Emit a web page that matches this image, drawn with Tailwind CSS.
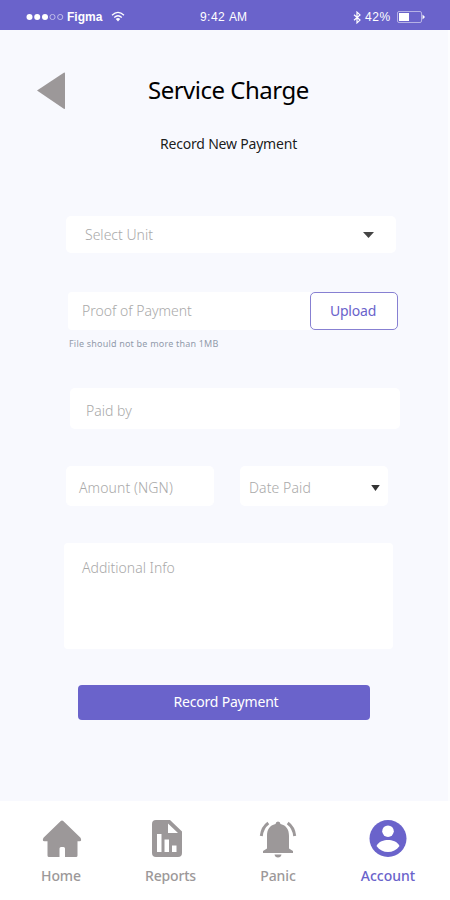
<!DOCTYPE html>
<html lang="en">
<head>
<meta charset="utf-8">
<meta name="viewport" content="width=device-width, initial-scale=1">
<title>Service Charge</title>
<script src="https://cdn.jsdelivr.net/npm/@tailwindcss/browser@4"></script>
</head>
<body class="bg-white font-['Noto_Sans','Open_Sans',sans-serif]">
<div class="w-[450px] h-[900px] flex flex-col overflow-hidden whitespace-nowrap">
  <header class="h-[30px] shrink-0 bg-[#6a63cb] text-white grid grid-cols-3 items-center pl-[26px] pr-[25px] pt-[4px] font-['Liberation_Sans',sans-serif] text-[12px]">
    <div class="flex items-center">
      <svg class="w-[38px] h-[8px]" viewBox="0 0 38 8" fill="white"><circle cx="3.5" cy="4" r="3"/><circle cx="11.2" cy="4" r="3"/><circle cx="19" cy="4" r="3"/><g fill="none" stroke="white" stroke-width=".7" opacity=".8"><circle cx="26.5" cy="4" r="2.6"/><circle cx="34.2" cy="4" r="2.6"/></g></svg>
      <span class="ml-[3px] font-bold">Figma</span>
      <svg class="ml-[9px] w-[14px] h-[11px] -mt-[2px]" viewBox="0 0 14 11" fill="none" stroke="white" stroke-width="1.3"><path d="M1 4.2Q7-1.4 13 4.2M3.2 6.4Q7 3 10.8 6.4"/><path d="M4.8 7.9Q7 6.1 9.2 7.9L7 10.4Z" fill="white" stroke="none"/></svg>
    </div>
    <div class="text-center pr-[4px] tracking-[0.5px]">9:42 <span class="tracking-[0px]">AM</span></div>
    <div class="flex items-center justify-end">
      <svg class="w-[8px] h-[13px]" viewBox="0 0 8 13" fill="none" stroke="white" stroke-width="1.2"><path d="M1 3.7l6 5.4-3 2.8V1.1l3 2.800-6 5.400"/></svg>
      <span class="ml-[4px] tracking-[0.7px]">42%</span>
      <svg class="ml-[6px] w-[28px] h-[12px]" viewBox="0 0 28 12"><rect x=".5" y=".5" width="24" height="11" rx="1.5" fill="none" stroke="white" stroke-opacity=".5"/><rect x="2" y="2" width="10" height="8" fill="white"/><path d="M25.500 3.500L28 6l-2.500 2.500z" fill="white"/></svg>
    </div>
  </header>

  <main class="h-[771px] shrink-0 bg-[#f8f9fe] border-r-2 border-[#fcfdff] flex flex-col items-start text-[14px] leading-[20px] text-[#a9a9a9] font-light">
    <div class="mt-[42px] h-[38px] flex items-center pl-[36px] text-black font-normal">
      <svg class="w-[30px] h-[38px]" viewBox="0 0 30 38" fill="#9c9899"><path d="M1 18.500L27.800.8Q29 .2 29 1.500V36Q29 37.500 27.800 36.800Z"/></svg>
      <h1 class="ml-[82px] -mt-[2px] text-[24px] leading-[30px] tracking-[-0.5px]">Service Charge</h1>
    </div>
    <h2 class="mt-[24px] ml-[160px] text-[14px] text-black/90 font-normal tracking-[-0.2px]">Record New Payment</h2>

    <div class="mt-[62px] ml-[66px] w-[330px] h-[37px] bg-white rounded-[5px] flex items-center justify-between pl-[19px] pr-[22px]">
      <span>Select Unit</span>
      <svg class="w-[11px] h-[6px]" viewBox="0 0 11 6" fill="#444"><path d="M0 0h11L5.500 6z"/></svg>
    </div>

    <div class="mt-[39px] ml-[68px] w-[330px] h-[38px] flex">
      <div class="w-[242px] bg-white rounded-l-[4px] flex items-center pl-[14px]">Proof of Payment</div>
      <button class="w-[88px] bg-white border border-[#8780d2] rounded-[5px] text-[#6a63cb] font-normal tracking-[-0.2px] pr-[2px]">Upload</button>
    </div>
    <p class="mt-[8px] ml-[69px] h-[12px] text-[9px] leading-[12px] tracking-[0.2px] text-[#929bab] font-normal">File should not be more than 1MB</p>

    <div class="mt-[38px] ml-[70px] w-[330px] h-[41px] bg-white rounded-[5px] flex items-center pl-[16px] pt-[5px]">Paid by</div>

    <div class="mt-[37px] ml-[66px] flex gap-[26px] h-[40px]">
      <div class="w-[148px] bg-white rounded-[5px] flex items-center pl-[13px] pt-[3px] tracking-[0.1px]">Amount (NGN)</div>
      <div class="w-[148px] bg-white rounded-[5px] flex items-center justify-between pl-[9px] pr-[8px] pt-[3px]">
        <span class="tracking-[0.1px]">Date Paid</span>
        <svg class="w-[9px] h-[6px]" viewBox="0 0 10 7" fill="#333"><path d="M0 0h10L5 7z"/></svg>
      </div>
    </div>

    <div class="mt-[37px] ml-[64px] w-[329px] h-[106px] bg-white rounded-[4px] pl-[18px] pt-[15px]">Additional Info</div>

    <button class="mt-[36px] ml-[78px] w-[292px] h-[35px] rounded-[4px] bg-[#6a63cb] text-white font-normal pl-[4px] pb-[1px] tracking-[-0.2px]">Record Payment</button>
  </main>

  <nav class="h-[99px] bg-white flex pt-[18px] text-[14px] leading-[20px] text-[#9c9899] font-medium pl-[6px]">
    <div class="w-[110px] flex flex-col items-center pl-[2px]">
      <svg class="w-[40px] h-[40px]" viewBox="0 0 40 40" fill="#9c9899"><path d="M18.500 2.200Q20 .8 21.500 2.200L38.500 18.800Q40.200 22.200 37.500 22.200H35.500V36.500Q35.500 38 34 38H23V29.500Q23 28 21.500 28H19Q17.500 28 17.500 29.500V38H7Q5.500 38 5.500 36.500V22.200H2.500Q-.2 22.200 1.500 18.800Z"/></svg>
      <span class="mt-[7px] -ml-[2px] tracking-[-0.1px]">Home</span>
    </div>
    <div class="w-[110px] flex flex-col items-center pr-[8px]">
      <svg class="w-[30px] h-[40px]" viewBox="0 0 30 40"><path fill="#9c9899" fill-rule="evenodd" d="M4 1H18L30 12.500V34Q30 38 26 38H4Q0 38 0 34V5Q0 1 4 1ZM16 4.500V14H26ZM5 15V33H9.500V15ZM12.500 20.500V33H17V20.500ZM20 26.500V33H24.500V26.500Z"/></svg>
      <span class="mt-[7px] ml-[7px] tracking-[-0.2px]">Reports</span>
    </div>
    <div class="w-[104px] flex flex-col items-center">
      <svg class="w-[38px] h-[40px]" viewBox="0 0 38 40" fill="#9c9899"><path d="M19 2.500Q21.300 2.500 21.500 5C27.500 6.500 30 10.500 30 17V29.500L34 32V34H4V32L8 29.500V17C8 10.500 10.500 6.500 16.500 5Q16.700 2.500 19 2.500ZM15.500 35.500H22.500Q22 38.500 19 38.500T15.500 35.500Z"/><path d="M9.300 4Q3.200 8.500 2.300 17M28.700 4Q34.800 8.500 35.700 17" fill="none" stroke="#9c9899" stroke-width="3"/></svg>
      <span class="mt-[7px] tracking-[-0.1px]">Panic</span>
    </div>
    <div class="w-[116px] flex flex-col items-center text-[#6a63cb]">
      <svg class="w-[38px] h-[40px]" viewBox="0 0 38 40"><circle cx="19" cy="19.500" r="18.500" fill="#6a63cb"/><circle cx="19" cy="12.200" r="5.800" fill="white"/><path fill="white" d="M7.500 27C9.500 22.500 15 21 19 21S28.500 22.500 30.500 27C27.500 31 23.500 33 19 33S10.500 31 7.500 27Z"/></svg>
      <span class="mt-[7px]">Account</span>
    </div>
  </nav>
</div>
</body>
</html>
